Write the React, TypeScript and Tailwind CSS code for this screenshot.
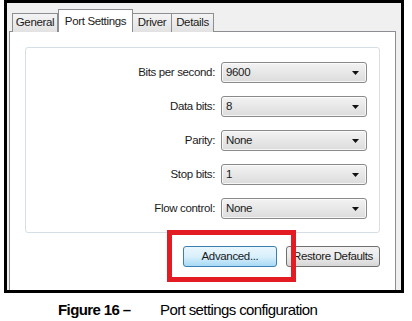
import React from "react";

const rows = [
  { label: "Bits per second:", value: "9600" },
  { label: "Data bits:", value: "8" },
  { label: "Parity:", value: "None" },
  { label: "Stop bits:", value: "1" },
  { label: "Flow control:", value: "None" },
];

const txt = "text-[11.5px] tracking-[-0.35px] text-[#1a1a1a]";

function Combo({ value }: { value: string }) {
  return (
    <div className="w-[146px] h-[21px] rounded-[3px] border border-[#8a8a8a] bg-gradient-to-b from-[#f3f3f3] to-[#dcdcdc] flex items-center pl-[4px] pr-[7px] shadow-[inset_0_0_0_1px_rgba(255,255,255,0.7)]">
      <span className="flex-1 text-[11.5px] tracking-[-0.35px] text-[#1a1a1a] leading-none">{value}</span>
      <svg width="7" height="4" viewBox="0 0 7 4">
        <path d="M0 0 L7 0 L3.5 4 Z" fill="#111" />
      </svg>
    </div>
  );
}

export default function App() {
  return (
    <div
      className="w-[412px] h-[321px] bg-white relative overflow-hidden"
      style={{ fontFamily: '"Liberation Sans", Arial, sans-serif' }}
    >
      <div className="ml-[4px] w-[400px] h-[293px] border-[3px] border-black bg-[#f0f0f0] flex flex-col pl-[2px] pr-[5px] overflow-hidden">
        {/* tabs */}
        <div className="h-[28px] flex items-end pl-[3px] relative z-10">
          <div className={`w-[46px] h-[19px] border border-b-0 border-[#8c8e94] bg-gradient-to-b from-[#f4f4f4] to-[#e2e2e2] flex items-center justify-center mb-[-1px] ${txt}`}>
            General
          </div>
          <div className={`w-[75px] h-[23px] border border-b-0 border-[#8c8e94] bg-white flex items-start pt-[3px] justify-center mb-[-1px] ${txt}`}>
            Port Settings
          </div>
          <div className={`w-[39px] h-[19px] border border-b-0 border-l-0 border-[#8c8e94] bg-gradient-to-b from-[#f4f4f4] to-[#e2e2e2] flex items-center justify-center mb-[-1px] ${txt}`}>
            Driver
          </div>
          <div className={`w-[42px] h-[19px] border border-b-0 border-l-0 border-[#8c8e94] bg-gradient-to-b from-[#f4f4f4] to-[#e2e2e2] flex items-center justify-center mb-[-1px] ${txt}`}>
            Details
          </div>
        </div>
        {/* panel */}
        <div className="flex-1 bg-white border border-b-0 border-[#8c8e94] pt-[15px] px-[15px]">
          <div className="h-[186px] border border-[#d5dfe5] rounded-[3px] pt-[14px] pr-[12px] flex flex-col gap-[13px]">
            {rows.map((r) => (
              <div key={r.label} className="flex items-center justify-end gap-[6px]">
                <span className={txt}>{r.label}</span>
                <Combo value={r.value} />
              </div>
            ))}
          </div>
          <div className="flex justify-end gap-[9px] mt-[13px]">
            <div className={`w-[94px] h-[21px] rounded-[3px] border border-[#3c7fb1] bg-gradient-to-b from-[#eaf6fd] via-[#d9f0fc] to-[#a7d9f5] flex items-center justify-center ${txt}`}>
              Advanced...
            </div>
            <div className={`w-[94px] h-[21px] rounded-[3px] border border-[#707070] bg-gradient-to-b from-[#f2f2f2] via-[#ebebeb] to-[#d6d6d6] flex items-center justify-center ${txt}`}>
              Restore Defaults
            </div>
          </div>
        </div>
      </div>
      {/* red highlight */}
      <div className="absolute left-[167px] top-[230px] w-[129px] h-[52px] border-[5px] border-[#e31b23]" />
      {/* caption */}
      <div className="flex items-center mt-[9px] text-[15px] tracking-[-0.6px] text-black leading-none">
        <span className="ml-[58px] w-[102px] font-bold">Figure 16 –</span>
        <span>Port settings configuration</span>
      </div>
    </div>
  );
}
